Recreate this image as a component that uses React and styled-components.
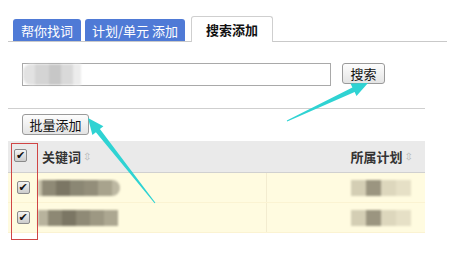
import React from 'react'
import styled, { createGlobalStyle } from 'styled-components'

const GlobalStyle = createGlobalStyle`
  html, body {
    margin: 0;
    padding: 0;
    background: #fff;
    width: 452px;
    height: 266px;
    overflow: hidden;
  }
  body {
    font-family: "Liberation Sans", "Noto Sans CJK SC", sans-serif;
    font-size: 12px;
    color: #222;
  }
`

const Page = styled.div`
  position: relative;
  width: 452px;
  height: 266px;
  padding-top: 16px;
  box-sizing: border-box;
`

const TabBar = styled.div`
  margin: 0 5px 0 8px;
  padding-left: 5px;
  height: 25px;
  display: flex;
  align-items: flex-end;
  border-bottom: 1px solid #c9c9c9;
`

const Tab = styled.div`
  height: 22px;
  width: ${p => p.w}px;
  margin-right: ${p => p.gap}px;
  box-sizing: border-box;
  display: flex;
  align-items: center;
  justify-content: center;
  background: #4f7ad6;
  color: #fff;
  font-size: 13px;
  border-radius: 3px 3px 0 0;
  font-family: "Noto Sans CJK SC", sans-serif;
`

const ActiveTab = styled(Tab)`
  height: 26px;
  background: #fff;
  color: #111;
  font-weight: 700;
  border: 1px solid #cfcfcf;
  border-bottom: none;
  margin-bottom: -1px;
`

const SearchRow = styled.div`
  margin-top: 21px;
  padding-left: 22px;
  display: flex;
  align-items: flex-start;
  gap: 11px;
`

const SearchInput = styled.div`
  width: 309px;
  height: 23px;
  box-sizing: border-box;
  border: 1px solid #a9a9a9;
  background: #fff;
  display: flex;
  align-items: center;
`

const Mosaic = styled.div`
  display: flex;
  height: ${p => p.h}px;
  margin-left: ${p => p.ml || 0}px;
  filter: blur(0.8px);
`

const Cell = styled.div`
  width: ${p => p.w}px;
  background: ${p => p.c};
  border-radius: ${p => p.r || 0};
`

const Button = styled.button`
  height: 21px;
  width: ${p => p.w}px;
  padding: 0;
  box-sizing: border-box;
  border: 1px solid #9a9a9a;
  border-radius: 3px;
  background: linear-gradient(#fdfdfd, #e4e4e4);
  font-family: "Noto Sans CJK SC", sans-serif;
  font-size: 13px;
  color: #111;
  line-height: 19px;
`

const Divider = styled.div`
  margin: 22px 27px 0 8px;
  border-top: 1px solid #cfcfcf;
`

const BatchRow = styled.div`
  margin-top: 5px;
  padding-left: 22px;
`

const Table = styled.div`
  margin: 6px 27px 0 8px;
`

const HeadRow = styled.div`
  display: grid;
  grid-template-columns: 30px 229px 1fr;
  height: 31px;
  background: #eaeaea;
  border-bottom: 1px solid #d0d0d0;
  align-items: center;
  font-family: "Noto Sans CJK SC", sans-serif;
  font-weight: 700;
  font-size: 13px;
  color: #333;
`

const Row = styled.div`
  display: grid;
  grid-template-columns: 30px 229px 1fr;
  height: 29px;
  background: #fffbe0;
  border-bottom: 1px solid #fbf3d2;
  align-items: center;
`

const CheckCell = styled.div`
  display: flex;
  justify-content: ${p => (p.head ? 'flex-start' : 'center')};
  padding-left: ${p => (p.head ? 6 : 0)}px;
  align-self: ${p => (p.head ? 'start' : 'center')};
  margin-top: ${p => (p.head ? 8 : 0)}px;
`

const CheckBox = styled.span`
  width: 11px;
  height: 11px;
  border: 1px solid #8a8a8a;
  border-radius: 2px;
  background: linear-gradient(#f4f4f4, #cccccc);
  display: flex;
  align-items: center;
  justify-content: center;
  font-size: 11px;
  font-weight: 700;
  line-height: 1;
  color: #111;
  font-family: "DejaVu Sans", sans-serif;
`

const HeadCell = styled.div`
  display: flex;
  align-items: center;
  justify-content: ${p => (p.right ? 'flex-end' : 'flex-start')};
  padding-left: ${p => (p.right ? 0 : 4)}px;
  padding-right: ${p => (p.right ? 12 : 0)}px;
  height: 100%;
`

const SortIcon = styled.span`
  font-family: "DejaVu Sans", sans-serif;
  font-weight: 400;
  font-size: 10px;
  color: #b5b5b5;
  margin-left: 2px;
`

const BodyCell = styled.div`
  height: 100%;
  display: flex;
  align-items: center;
  justify-content: ${p => (p.right ? 'flex-end' : 'flex-start')};
  padding-right: ${p => (p.right ? 14 : 0)}px;
  border-right: ${p => (p.line ? '1px solid #f3ecd0' : 'none')};
`

const RedFrame = styled.div`
  position: absolute;
  left: 11px;
  top: 143px;
  width: 27px;
  height: 97px;
  border: 1px solid #d04545;
  box-sizing: border-box;
`

const Overlay = styled.svg`
  position: absolute;
  left: 0;
  top: 0;
  pointer-events: none;
`

const kw1 = [
  ['#c4bfa8', 4], ['#8f8a76', 14], ['#7b7664', 14], ['#8b8774', 14], ['#938e7a', 14], ['#a8a38d', 14], ['#bdb8a2', 8],
]
const kw2 = [
  ['#b8b39d', 10], ['#8d8874', 14], ['#7b7664', 14], ['#8f8a76', 14], ['#9d9883', 14], ['#aca791', 14],
]
const plan = [['#d4ceb4', 15], ['#9b9580', 15], ['#ddd7bd', 15], ['#e6e0c6', 15]]

const App = () => (
  <Page>
    <GlobalStyle />
    <TabBar>
      <Tab w={68} gap={4}>帮你找词</Tab>
      <Tab w={100} gap={6}>计划/单元 添加</Tab>
      <ActiveTab w={82} gap={0}>搜索添加</ActiveTab>
    </TabBar>

    <SearchRow>
      <SearchInput>
        <Mosaic h={21}>
          <Cell w={12} c="#e2e2e2" r="8px 0 0 8px" />
          <Cell w={14} c="#d4d4d4" />
          <Cell w={12} c="#c7c7c7" />
          <Cell w={12} c="#d9d9d9" />
          <Cell w={8} c="#ececec" />
        </Mosaic>
      </SearchInput>
      <Button w={43}>搜索</Button>
    </SearchRow>

    <Divider />

    <BatchRow>
      <Button w={67}>批量添加</Button>
    </BatchRow>

    <Table>
      <HeadRow>
        <CheckCell head>
          <CheckBox>✔</CheckBox>
        </CheckCell>
        <HeadCell>关键词<SortIcon>⇳</SortIcon></HeadCell>
        <HeadCell right>所属计划<SortIcon>⇳</SortIcon></HeadCell>
      </HeadRow>
      {[kw1, kw2].map((kw, i) => (
        <Row key={i}>
          <CheckCell>
            <CheckBox>✔</CheckBox>
          </CheckCell>
          <BodyCell line>
            <Mosaic h={16}>
              {kw.map(([c, w], j) => (
                <Cell key={j} c={c} w={w} r={j === kw.length - 1 && i === 0 ? '0 8px 8px 0' : 0} />
              ))}
            </Mosaic>
          </BodyCell>
          <BodyCell right>
            <Mosaic h={16}>
              {plan.map(([c, w], j) => (
                <Cell key={j} c={c} w={w} />
              ))}
            </Mosaic>
          </BodyCell>
        </Row>
      ))}
    </Table>

    <RedFrame />

    <Overlay width="452" height="266" viewBox="0 0 452 266">
      <polygon
        points="287.2,121.5 354.6,92.1 356.5,96.1 368,83 350.5,83.5 352.4,87.5 286.8,120.5"
        fill="#2fd3d3"
      />
      <polygon
        points="155.4,202.7 99.9,129.1 103.4,126.3 88,118 92.4,134.9 95.9,132.2 154.6,203.3"
        fill="#2fd3d3"
      />
    </Overlay>
  </Page>
)

export default App
